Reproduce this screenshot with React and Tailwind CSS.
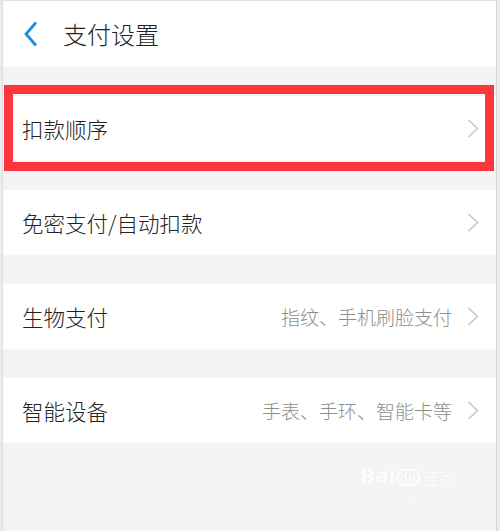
import React from "react";

const font = { fontFamily: '"Noto Sans CJK SC", "Noto Sans", sans-serif' };

const Chevron = () => (
  <svg width="12" height="19" viewBox="0 0 12 19" fill="none" className="shrink-0">
    <path d="M1.5 1 L10.5 9.5 L1.5 18" stroke="#c6c6c6" strokeWidth="1.5" />
  </svg>
);

const Row = ({ title, hint }) => (
  <div className="h-[65px] bg-white flex items-center pl-[19px] pr-[17px]">
    <span className="text-[21.5px] font-light text-[#222] leading-none">{title}</span>
    <div className="ml-auto flex items-center gap-[15px]">
      {hint && <span className="text-[19px] font-light text-[#8e8e8e] leading-none">{hint}</span>}
      <Chevron />
    </div>
  </div>
);

export default function App() {
  return (
    <div className="w-[500px] h-[531px] flex bg-[#f4f4f4] overflow-hidden" style={font}>
      <div className="w-[3px] bg-[#ececec] border-r border-[#dcdcdc]" />
      <div className="relative flex-1 flex flex-col">
        <div className="h-[67px] bg-white flex items-center border-t border-[#e4e4e4]">
          <svg width="40" height="30" viewBox="0 0 40 30" className="ml-[15px]">
            <path d="M18 3.5 L8 15 L18 26.5" stroke="#1b8de2" strokeWidth="2.8" fill="none" />
          </svg>
          <span className="ml-[5px] text-[24px] font-light text-[#222] leading-none">支付设置</span>
        </div>
        <div className="flex flex-col gap-[29px] pt-[29px]">
          <Row title="扣款顺序" />
          <Row title="免密支付/自动扣款" />
          <Row title="生物支付" hint="指纹、手机刷脸支付" />
          <Row title="智能设备" hint="手表、手环、智能卡等" />
        </div>
        <div className="absolute top-[85px] left-[1px] w-[490px] h-[86px] border-[9px] border-[#fc363b]" />
        <div className="absolute left-[357px] top-[466px] flex flex-col items-start text-white opacity-90" style={{ textShadow: "0 0 1px #e2e2e2" }}>
          <div className="flex items-end">
            <span className="text-[20px] font-bold leading-none" style={{ fontFamily: '"DejaVu Sans", sans-serif' }}>Bai</span>
            <span className="text-[13px] font-bold leading-none px-[2px] rounded-full border-2 border-white">du</span>
            <span className="text-[16px] leading-none ml-[2px]">经验</span>
          </div>
          <span className="text-[10px] leading-none mt-[9px] italic" style={{ fontFamily: '"Liberation Serif", serif' }}>jingyan.baidu.com</span>
        </div>
      </div>
      <div className="w-[4px] bg-[#eaeaea] border-l border-[#d6d6d6]" />
    </div>
  );
}
